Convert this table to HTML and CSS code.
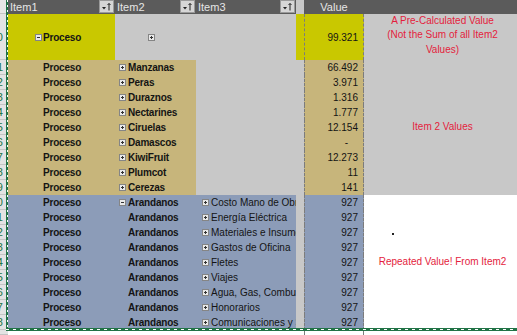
FILE: index.html
```html
<!DOCTYPE html>
<html>
<head>
<meta charset="utf-8">
<link rel="stylesheet" href="styles.css">
</head>
<body>
<div class="sheet">
  <div class="grid">
    <!-- header row -->
    <div class="rh hrh"></div>
    <div class="hd"><span>Item1</span><span class="btn"><svg width="13" height="11" viewBox="0 0 13 11"><path d="M2 6h4l-2 2.5z" fill="#222"/><path d="M9 9.5V2.5M7.5 4L9 2.5L10.5 4" stroke="#222" fill="none" stroke-width="1"/></svg></span></div>
    <div class="hd"><span>Item2</span><span class="btn"><svg width="13" height="11" viewBox="0 0 13 11"><path d="M2 6h4l-2 2.5z" fill="#222"/><path d="M9 9.5V2.5M7.5 4L9 2.5L10.5 4" stroke="#222" fill="none" stroke-width="1"/></svg></span></div>
    <div class="hd"><span>Item3</span><span class="btn"><svg width="13" height="11" viewBox="0 0 13 11"><path d="M2 6h4l-2 2.5z" fill="#222"/><path d="M9 9.5V2.5M7.5 4L9 2.5L10.5 4" stroke="#222" fill="none" stroke-width="1"/></svg></span></div>
    <div class="hgap"></div>
    <div class="hd hv">Value</div>
    <div class="hd"></div>

    <!-- total row -->
    <div class="rh"><span>10</span></div>
    <div class="c y i1"><svg class="ic" width="7" height="7" viewBox="0 0 7 7"><rect x=".5" y=".5" width="6" height="6" fill="#e9e9e9" stroke="#858585"/><path d="M2 3.5h3" stroke="#333"/></svg>Proceso</div>
    <div class="c g i2e"><svg class="ic" width="7" height="7" viewBox="0 0 7 7"><rect x=".5" y=".5" width="6" height="6" fill="#e9e9e9" stroke="#858585"/><path d="M2 3.5h3M3.5 2v3" stroke="#333"/></svg></div>
    <div class="c g"></div>
    <div class="c y"></div>
    <div class="c y v">99.321</div>
    <div class="note g n1">A Pre-Calculated Value<br>(Not the Sum of all Item2<br>Values)</div>

    <!-- beige rows -->
    <div class="rh"><span>11</span></div>
    <div class="c b i1"><span class="slot"></span>Proceso</div>
    <div class="c b i2"><svg class="ic" width="7" height="7" viewBox="0 0 7 7"><rect x=".5" y=".5" width="6" height="6" fill="#e9e9e9" stroke="#858585"/><path d="M2 3.5h3M3.5 2v3" stroke="#333"/></svg>Manzanas</div>
    <div class="c g"></div><div class="c g"></div>
    <div class="c b v">66.492</div>
    <div class="note g n2">Item 2 Values</div>

    <div class="rh"><span>12</span></div>
    <div class="c b i1"><span class="slot"></span>Proceso</div>
    <div class="c b i2"><svg class="ic" width="7" height="7" viewBox="0 0 7 7"><rect x=".5" y=".5" width="6" height="6" fill="#e9e9e9" stroke="#858585"/><path d="M2 3.5h3M3.5 2v3" stroke="#333"/></svg>Peras</div>
    <div class="c g"></div><div class="c g"></div>
    <div class="c b v">3.971</div>

    <div class="rh"><span>13</span></div>
    <div class="c b i1"><span class="slot"></span>Proceso</div>
    <div class="c b i2"><svg class="ic" width="7" height="7" viewBox="0 0 7 7"><rect x=".5" y=".5" width="6" height="6" fill="#e9e9e9" stroke="#858585"/><path d="M2 3.5h3M3.5 2v3" stroke="#333"/></svg>Duraznos</div>
    <div class="c g"></div><div class="c g"></div>
    <div class="c b v">1.316</div>

    <div class="rh"><span>14</span></div>
    <div class="c b i1"><span class="slot"></span>Proceso</div>
    <div class="c b i2"><svg class="ic" width="7" height="7" viewBox="0 0 7 7"><rect x=".5" y=".5" width="6" height="6" fill="#e9e9e9" stroke="#858585"/><path d="M2 3.5h3M3.5 2v3" stroke="#333"/></svg>Nectarines</div>
    <div class="c g"></div><div class="c g"></div>
    <div class="c b v">1.777</div>

    <div class="rh"><span>15</span></div>
    <div class="c b i1"><span class="slot"></span>Proceso</div>
    <div class="c b i2"><svg class="ic" width="7" height="7" viewBox="0 0 7 7"><rect x=".5" y=".5" width="6" height="6" fill="#e9e9e9" stroke="#858585"/><path d="M2 3.5h3M3.5 2v3" stroke="#333"/></svg>Ciruelas</div>
    <div class="c g"></div><div class="c g"></div>
    <div class="c b v">12.154</div>

    <div class="rh"><span>16</span></div>
    <div class="c b i1"><span class="slot"></span>Proceso</div>
    <div class="c b i2"><svg class="ic" width="7" height="7" viewBox="0 0 7 7"><rect x=".5" y=".5" width="6" height="6" fill="#e9e9e9" stroke="#858585"/><path d="M2 3.5h3M3.5 2v3" stroke="#333"/></svg>Damascos</div>
    <div class="c g"></div><div class="c g"></div>
    <div class="c b v dash">-</div>

    <div class="rh"><span>17</span></div>
    <div class="c b i1"><span class="slot"></span>Proceso</div>
    <div class="c b i2"><svg class="ic" width="7" height="7" viewBox="0 0 7 7"><rect x=".5" y=".5" width="6" height="6" fill="#e9e9e9" stroke="#858585"/><path d="M2 3.5h3M3.5 2v3" stroke="#333"/></svg>KiwiFruit</div>
    <div class="c g"></div><div class="c g"></div>
    <div class="c b v">12.273</div>

    <div class="rh"><span>18</span></div>
    <div class="c b i1"><span class="slot"></span>Proceso</div>
    <div class="c b i2"><svg class="ic" width="7" height="7" viewBox="0 0 7 7"><rect x=".5" y=".5" width="6" height="6" fill="#e9e9e9" stroke="#858585"/><path d="M2 3.5h3M3.5 2v3" stroke="#333"/></svg>Plumcot</div>
    <div class="c g"></div><div class="c g"></div>
    <div class="c b v">11</div>

    <div class="rh"><span>19</span></div>
    <div class="c b i1"><span class="slot"></span>Proceso</div>
    <div class="c b i2"><svg class="ic" width="7" height="7" viewBox="0 0 7 7"><rect x=".5" y=".5" width="6" height="6" fill="#e9e9e9" stroke="#858585"/><path d="M2 3.5h3M3.5 2v3" stroke="#333"/></svg>Cerezas</div>
    <div class="c g"></div><div class="c g"></div>
    <div class="c b v">141</div>

    <!-- blue rows -->
    <div class="rh"><span>20</span></div>
    <div class="c u i1"><span class="slot"></span>Proceso</div>
    <div class="c u i2"><svg class="ic" width="7" height="7" viewBox="0 0 7 7"><rect x=".5" y=".5" width="6" height="6" fill="#e9e9e9" stroke="#858585"/><path d="M2 3.5h3" stroke="#333"/></svg>Arandanos</div>
    <div class="c u i3"><svg class="ic" width="7" height="7" viewBox="0 0 7 7"><rect x=".5" y=".5" width="6" height="6" fill="#e9e9e9" stroke="#858585"/><path d="M2 3.5h3M3.5 2v3" stroke="#333"/></svg>Costo Mano de Obra</div>
    <div class="c g"></div>
    <div class="c u v">927</div>
    <div class="note w n3">Repeated Value! From Item2</div>

    <div class="rh"><span>21</span></div>
    <div class="c u i1"><span class="slot"></span>Proceso</div>
    <div class="c u i2"><span class="slot"></span>Arandanos</div>
    <div class="c u i3"><svg class="ic" width="7" height="7" viewBox="0 0 7 7"><rect x=".5" y=".5" width="6" height="6" fill="#e9e9e9" stroke="#858585"/><path d="M2 3.5h3M3.5 2v3" stroke="#333"/></svg>Energía Eléctrica</div>
    <div class="c g"></div>
    <div class="c u v">927</div>

    <div class="rh"><span>22</span></div>
    <div class="c u i1"><span class="slot"></span>Proceso</div>
    <div class="c u i2"><span class="slot"></span>Arandanos</div>
    <div class="c u i3"><svg class="ic" width="7" height="7" viewBox="0 0 7 7"><rect x=".5" y=".5" width="6" height="6" fill="#e9e9e9" stroke="#858585"/><path d="M2 3.5h3M3.5 2v3" stroke="#333"/></svg>Materiales e Insumos</div>
    <div class="c g"></div>
    <div class="c u v">927</div>

    <div class="rh"><span>23</span></div>
    <div class="c u i1"><span class="slot"></span>Proceso</div>
    <div class="c u i2"><span class="slot"></span>Arandanos</div>
    <div class="c u i3"><svg class="ic" width="7" height="7" viewBox="0 0 7 7"><rect x=".5" y=".5" width="6" height="6" fill="#e9e9e9" stroke="#858585"/><path d="M2 3.5h3M3.5 2v3" stroke="#333"/></svg>Gastos de Oficina</div>
    <div class="c g"></div>
    <div class="c u v">927</div>

    <div class="rh"><span>24</span></div>
    <div class="c u i1"><span class="slot"></span>Proceso</div>
    <div class="c u i2"><span class="slot"></span>Arandanos</div>
    <div class="c u i3"><svg class="ic" width="7" height="7" viewBox="0 0 7 7"><rect x=".5" y=".5" width="6" height="6" fill="#e9e9e9" stroke="#858585"/><path d="M2 3.5h3M3.5 2v3" stroke="#333"/></svg>Fletes</div>
    <div class="c g"></div>
    <div class="c u v">927</div>

    <div class="rh"><span>25</span></div>
    <div class="c u i1"><span class="slot"></span>Proceso</div>
    <div class="c u i2"><span class="slot"></span>Arandanos</div>
    <div class="c u i3"><svg class="ic" width="7" height="7" viewBox="0 0 7 7"><rect x=".5" y=".5" width="6" height="6" fill="#e9e9e9" stroke="#858585"/><path d="M2 3.5h3M3.5 2v3" stroke="#333"/></svg>Viajes</div>
    <div class="c g"></div>
    <div class="c u v">927</div>

    <div class="rh"><span>26</span></div>
    <div class="c u i1"><span class="slot"></span>Proceso</div>
    <div class="c u i2"><span class="slot"></span>Arandanos</div>
    <div class="c u i3"><svg class="ic" width="7" height="7" viewBox="0 0 7 7"><rect x=".5" y=".5" width="6" height="6" fill="#e9e9e9" stroke="#858585"/><path d="M2 3.5h3M3.5 2v3" stroke="#333"/></svg>Agua, Gas, Combustible</div>
    <div class="c g"></div>
    <div class="c u v">927</div>

    <div class="rh"><span>27</span></div>
    <div class="c u i1"><span class="slot"></span>Proceso</div>
    <div class="c u i2"><span class="slot"></span>Arandanos</div>
    <div class="c u i3"><svg class="ic" width="7" height="7" viewBox="0 0 7 7"><rect x=".5" y=".5" width="6" height="6" fill="#e9e9e9" stroke="#858585"/><path d="M2 3.5h3M3.5 2v3" stroke="#333"/></svg>Honorarios</div>
    <div class="c g"></div>
    <div class="c u v">927</div>

    <div class="rh"><span>28</span></div>
    <div class="c u i1"><span class="slot"></span>Proceso</div>
    <div class="c u i2"><span class="slot"></span>Arandanos</div>
    <div class="c u i3"><svg class="ic" width="7" height="7" viewBox="0 0 7 7"><rect x=".5" y=".5" width="6" height="6" fill="#e9e9e9" stroke="#858585"/><path d="M2 3.5h3M3.5 2v3" stroke="#333"/></svg>Comunicaciones y Servicios</div>
    <div class="c g"></div>
    <div class="c u v">927</div>

    <!-- filler row below -->
    <div class="rh"></div>
    <div></div><div></div><div></div><div></div>
    <div class="v"></div>
    <div></div>
  </div>
  <div class="marquee"></div>
</div>
</body>
</html>
```

FILE: styles.css
```css
html, body {
  margin: 0;
  padding: 0;
  background: #ffffff;
}

.sheet {
  position: relative;
  width: 517px;
  height: 335px;
  overflow: hidden;
  font-family: "Liberation Sans", Arial, sans-serif;
  font-size: 10px;
  color: #141414;
}

.grid {
  display: grid;
  grid-template-columns: 8px 107px 81px 100px 8px 60px 153px;
  grid-template-rows: 14px 46px repeat(18, 15px) 5px;
}

/* row header strip */
.rh {
  background: #e3e3e3;
  border-bottom: 1px solid #c4c4c4;
  box-sizing: border-box;
  display: flex;
  justify-content: flex-end;
  align-items: center;
  padding-right: 5px;
  overflow: hidden;
  color: #217346;
  font-size: 11px;
  line-height: 14px;
}
.rh span { flex: none; }
.hrh { background: #e6e6e6; }

/* header */
.hd {
  background: #5b5b5b;
  color: #e6e6e6;
  font-size: 11px;
  display: flex;
  align-items: center;
  justify-content: space-between;
  padding-left: 2px;
  white-space: nowrap;
  overflow: hidden;
}
.hv {
  justify-content: center;
  padding-left: 0;
}
.btn {
  flex: none;
  align-self: flex-start;
  width: 15px;
  height: 13px;
  margin-right: 1px;
  box-sizing: border-box;
  border: 1px solid #9a9a9a;
  background: #d6d6d6;
  display: flex;
}
.hgap { background: #c8c8c8; }

/* body cells */
.c {
  display: flex;
  align-items: center;
  white-space: nowrap;
  overflow: hidden;
  line-height: 15px;
}
.y { background: #c9c800; }
.g { background: #c8c8c8; }
.b { background: #c7b57b; }
.u { background: #8c9cb8; }
.w { background: #ffffff; }

.ic { flex: none; display: block; }
.slot { flex: none; width: 7px; height: 7px; }

.i1 {
  padding-left: 27px;
  font-weight: bold;
  letter-spacing: -0.2px;
}
.i1 .ic, .i1 .slot { margin-right: 1px; }

.i2 {
  padding-left: 4px;
  font-weight: bold;
  letter-spacing: -0.2px;
}
.i2 .ic, .i2 .slot { margin-right: 2px; }

.i2e { padding-left: 33px; }

.i3 { padding-left: 6px; }
.i3 .ic { margin-right: 2px; }

.v {
  justify-content: flex-end;
  padding-right: 5px;
  box-sizing: border-box;
  border-left: 1px dashed #7c7c7c;
  border-right: 1px dashed #7c7c7c;
}
.dash { padding-right: 15px; }

/* notes */
.note {
  color: #e41d3d;
  display: flex;
  align-items: center;
  justify-content: center;
  text-align: center;
  line-height: 14.5px;
  padding-left: 4px;
  white-space: nowrap;
}
.n1 { padding-bottom: 3px; }
.n2 { grid-row: span 9; }
.n3 {
  grid-row: span 9;
  background: linear-gradient(#222, #222) 28px 38px / 2px 2px no-repeat, #ffffff;
}

/* copy marquee overlay */
.marquee {
  position: absolute;
  left: 6px;
  top: 0;
  width: 511px;
  height: 331px;
  pointer-events: none;
}
.marquee::before {
  content: "";
  position: absolute;
  left: 0;
  top: 0;
  width: 2px;
  height: 100%;
  background: repeating-linear-gradient(to bottom, #ffffff 0 2px, #217346 2px 5px) right top / 1px 100% no-repeat, #217346;
}
.marquee::after {
  content: "";
  position: absolute;
  left: 0;
  bottom: 0;
  width: 100%;
  height: 3px;
  background: repeating-linear-gradient(90deg, #ffffff 0 3px, #217346 3px 7px) left center / 100% 1px no-repeat, #217346;
}
```
